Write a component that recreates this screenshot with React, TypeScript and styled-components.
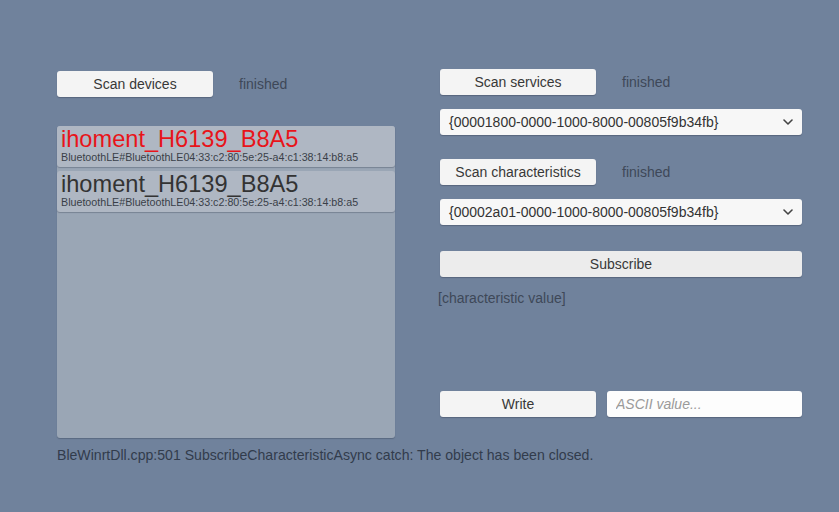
import styled, { createGlobalStyle } from "styled-components";

const devices = [
    { name: "ihoment_H6139_B8A5", selected: true },
    { name: "ihoment_H6139_B8A5", selected: false },
];

const DEVICE_ID = "BluetoothLE#BluetoothLE04:33:c2:80:5e:25-a4:c1:38:14:b8:a5";

export default function App() {
    return (
        <>
            <GlobalStyle />
            <Page>
                <Columns>
                    <LeftColumn>
                        <ControlRow>
                            <Button $width={156}>Scan devices</Button>
                            <Status>finished</Status>
                        </ControlRow>
                        <DeviceList>
                            {devices.map((d, i) => (
                                <DeviceItem key={i}>
                                    <DeviceName $selected={d.selected}>
                                        {d.name}
                                    </DeviceName>
                                    <DeviceId>{DEVICE_ID}</DeviceId>
                                </DeviceItem>
                            ))}
                        </DeviceList>
                    </LeftColumn>

                    <RightColumn>
                        <ControlRow>
                            <Button $width={156}>Scan services</Button>
                            <Status>finished</Status>
                        </ControlRow>
                        <Dropdown $top={14}>
                            <span>{"{00001800-0000-1000-8000-00805f9b34fb}"}</span>
                            <Chevron />
                        </Dropdown>
                        <ControlRow $top={24}>
                            <Button $width={156}>Scan characteristics</Button>
                            <Status>finished</Status>
                        </ControlRow>
                        <Dropdown $top={14}>
                            <span>{"{00002a01-0000-1000-8000-00805f9b34fb}"}</span>
                            <Chevron />
                        </Dropdown>
                        <Button $top={26} $tone="#ececec">
                            Subscribe
                        </Button>
                        <ValueText>[characteristic value]</ValueText>
                        <WriteRow>
                            <Button $width={156}>Write</Button>
                            <TextInput placeholder="ASCII value..." />
                        </WriteRow>
                    </RightColumn>
                </Columns>
                <LogText>
                    BleWinrtDll.cpp:501 SubscribeCharacteristicAsync catch: The
                    object has been closed.
                </LogText>
            </Page>
        </>
    );
}

function Chevron() {
    return (
        <svg width="10" height="6" viewBox="0 0 10 6">
            <polyline
                points="1,1 5,5 9,1"
                fill="none"
                stroke="#444"
                strokeWidth="1.6"
                strokeLinecap="round"
                strokeLinejoin="round"
            />
        </svg>
    );
}

const GlobalStyle = createGlobalStyle`
    html, body {
        margin: 0;
        height: 512px;
        overflow: hidden;
        background: #70829c;
        font-family: "Liberation Sans", Arial, sans-serif;
    }
`;

const Page = styled.div`
    padding: 69px 0 0 57px;
    box-sizing: border-box;
    width: 839px;
    height: 512px;
`;

const Columns = styled.div`
    display: grid;
    grid-template-columns: 338px 362px;
    column-gap: 45px;
    align-items: start;
`;

const LeftColumn = styled.div`
    display: flex;
    flex-direction: column;
    padding-top: 2px;
`;

const RightColumn = styled.div`
    display: flex;
    flex-direction: column;
`;

const ControlRow = styled.div<{ $top?: number }>`
    display: flex;
    align-items: center;
    gap: 25px;
    margin-top: ${(p) => p.$top ?? 0}px;
`;

const Button = styled.button<{ $width?: number; $top?: number; $tone?: string }>`
    width: ${(p) => (p.$width ? `${p.$width}px` : "100%")};
    height: 26px;
    margin-top: ${(p) => p.$top ?? 0}px;
    padding: 0;
    border: none;
    border-radius: 3px;
    background: ${(p) => p.$tone ?? "#f4f4f4"};
    box-shadow: 0 1px 1px rgba(40, 50, 70, 0.35);
    color: #383838;
    font-family: inherit;
    font-size: 14px;
    text-align: center;
    flex-shrink: 0;
`;

const Status = styled.span`
    margin-left: 1px;
    font-size: 14px;
    color: #3e4858;
`;

const DeviceList = styled.div`
    margin-top: 29px;
    height: 312px;
    background: #9aa6b5;
    border-radius: 3px;
    display: flex;
    flex-direction: column;
    gap: 4px;
    box-shadow: 0 1px 1px rgba(40, 50, 70, 0.3);
`;

const DeviceItem = styled.div`
    height: 41px;
    box-sizing: border-box;
    padding: 1px 4px 0;
    background: #afb7c3;
    border-radius: 3px;
    box-shadow: 0 1px 1px rgba(40, 50, 70, 0.3);
`;

const DeviceName = styled.div<{ $selected: boolean }>`
    font-size: 23.6px;
    line-height: 25px;
    color: ${(p) => (p.$selected ? "#e8141a" : "#333")};
`;

const DeviceId = styled.div`
    font-size: 10.7px;
    line-height: 11px;
    color: #3a3f48;
`;

const Dropdown = styled.div<{ $top?: number }>`
    display: flex;
    align-items: center;
    justify-content: space-between;
    height: 26px;
    margin-top: ${(p) => p.$top ?? 0}px;
    padding: 0 9px;
    background: #f7f7f7;
    border-radius: 3px;
    box-shadow: 0 1px 1px rgba(40, 50, 70, 0.35);
    color: #333;
    font-size: 14px;
`;

const ValueText = styled.div`
    margin: 13px 0 0 -2px;
    font-size: 14px;
    line-height: 16px;
    color: #3e4858;
`;

const WriteRow = styled.div`
    display: flex;
    gap: 11px;
    margin-top: 85px;
`;

const TextInput = styled.input`
    flex: 1;
    width: 0;
    min-width: 0;
    height: 26px;
    box-sizing: border-box;
    padding: 0 9px;
    border: none;
    border-radius: 3px;
    background: #fdfdfd;
    box-shadow: 0 1px 1px rgba(40, 50, 70, 0.35);
    font-family: inherit;
    font-size: 14px;
    outline: none;

    &::placeholder {
        color: #9a9a9a;
        font-style: italic;
    }
`;

const LogText = styled.div`
    margin-top: 9px;
    font-size: 14.1px;
    line-height: 16px;
    color: #323c4c;
    white-space: nowrap;
`;
